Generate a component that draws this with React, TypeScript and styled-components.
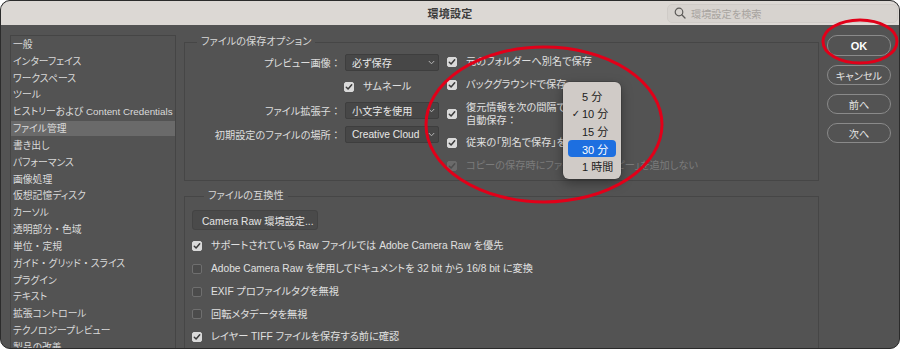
import React from "react";
import styled, { createGlobalStyle } from "styled-components";

const GlobalStyle = createGlobalStyle`
  html, body { margin: 0; padding: 0; background: #ffffff; }
  body { font-family: "Liberation Sans", "Noto Sans CJK JP", sans-serif; }
  * { box-sizing: border-box; }
`;

const Window = styled.div`
  position: relative;
  width: 900px;
  height: 349px;
  border: 1px solid #2b2b2b;
  border-radius: 10px;
  overflow: hidden;
  background: #535353;
  display: flex;
  flex-direction: column;
  font-feature-settings: "palt";
`;

const Punct = styled.span`
  font-feature-settings: normal;
`;

const TitleBar = styled.header`
  flex: none;
  height: 24px;
  background: #dcd8d4;
  display: grid;
  grid-template-columns: 1fr auto 1fr;
  align-items: center;
`;

const Title = styled.div`
  grid-column: 2;
  font-family: "Noto Sans CJK JP", sans-serif;
  font-weight: 700;
  font-size: 11px;
  color: #3b3b3b;
  letter-spacing: 0.2px;
`;

const Search = styled.div`
  grid-column: 3;
  justify-self: end;
  margin-right: 1px;
  width: 231px;
  height: 19px;
  border-radius: 5px;
  background: #d7d3cf;
  border: 1px solid #cfcbc7;
  display: flex;
  align-items: center;
  gap: 5px;
  padding-left: 6px;
  color: #a8a4a0;
  font-size: 10.2px;
`;

const Body = styled.div`
  flex: 1;
  min-height: 0;
  display: grid;
  grid-template-columns: 166px 635px 64px;
  column-gap: 8px;
  align-items: start;
  padding: 10px 0 0 9px;
`;

const Sidebar = styled.ul`
  margin: 0;
  height: 340px;
  border: 1px solid #454545;
  padding: 1px 0 0 0;
  list-style: none;
  display: flex;
  flex-direction: column;
  gap: 1.83px;
`;

const SideItem = styled.li<{ $active?: boolean }>`
  height: 15px;
  line-height: 15px;
  padding-left: 2px;
  font-size: 9.8px;
  color: #dadada;
  white-space: nowrap;
  background: ${(p) => (p.$active ? "#6a6a6a" : "transparent")};
`;

const Main = styled.div`
  display: flex;
  flex-direction: column;
  gap: 8px;
`;

const Section = styled.fieldset<{ $open?: boolean }>`
  margin: 0;
  min-width: 0;
  border: 1px solid #464646;
  ${(p) => (p.$open ? "border-bottom: none; height: 200px;" : "")}
  padding: ${(p) => (p.$open ? "7px 0 0 7px" : "5px 0 6px 0")};
`;

const Legend = styled.legend`
  margin-left: 12px;
  padding: 0 4px;
  font-size: 10.2px;
  line-height: 14px;
  color: #d8d8d8;
`;

const SaveOptions = styled.div`
  display: flex;
  align-items: flex-start;
`;

const FormGrid = styled.div`
  padding-left: 1px;
  display: grid;
  grid-template-columns: 155px 94px;
  grid-auto-rows: 17px;
  column-gap: 4px;
  row-gap: 7px;
  align-items: center;
`;

const FieldLabel = styled.div`
  grid-column: 1;
  text-align: right;
  font-size: 10.2px;
  color: #dedede;
  white-space: nowrap;
`;

const Select = styled.div`
  grid-column: 2;
  height: 17px;
  background: #474747;
  border: 1px solid #3e3e3e;
  border-radius: 2px;
  display: flex;
  align-items: center;
  justify-content: space-between;
  padding: 0 3px 0 6px;
  font-size: 10.2px;
  color: #e8e8e8;
  white-space: nowrap;
  overflow: hidden;
`;

const CheckRows = styled.div`
  margin-left: 8px;
  display: flex;
  flex-direction: column;
  gap: 7px;
`;

const CheckRow = styled.div<{ $tall?: boolean; $disabled?: boolean }>`
  height: ${(p) => (p.$tall ? 28 : 16)}px;
  display: flex;
  align-items: center;
  gap: 9px;
  font-size: 10.2px;
  line-height: 13.5px;
  color: ${(p) => (p.$disabled ? "#7b7b7b" : "#e0e0e0")};
  white-space: nowrap;
`;

const ThumbRow = styled(CheckRow)`
  grid-column: 2;
  height: 17px;
  margin-left: -1px;
`;

const Box = styled.span<{ $checked?: boolean; $disabled?: boolean }>`
  flex: none;
  width: 10px;
  height: 10px;
  border-radius: 2px;
  display: inline-flex;
  align-items: center;
  justify-content: center;
  background: ${(p) =>
    p.$checked ? (p.$disabled ? "#6b6b6b" : "#d9d9d9") : "#4b4b4b"};
  border: 1px solid
    ${(p) => (p.$checked ? (p.$disabled ? "#6b6b6b" : "#d9d9d9") : "#6f6f6f")};
`;

const Compat = styled.div`
  display: flex;
  flex-direction: column;
  gap: 6.8px;
`;

const RawButton = styled.div`
  align-self: flex-start;
  width: 126px;
  height: 20px;
  margin-bottom: 1.2px;
  background: #4a4a4a;
  border: 1px solid #434343;
  border-radius: 3px;
  display: flex;
  align-items: center;
  padding-left: 9px;
  font-size: 10.2px;
  color: #e4e4e4;
  white-space: nowrap;
`;

const Actions = styled.div`
  display: flex;
  flex-direction: column;
  gap: 9px;
`;

const ActionButton = styled.div<{ $primary?: boolean }>`
  height: ${(p) => (p.$primary ? 21 : 20)}px;
  border: 1px solid #8a8a8a;
  border-radius: 10px;
  display: flex;
  align-items: center;
  justify-content: center;
  font-size: ${(p) => (p.$primary ? 11 : 10.2)}px;
  font-weight: ${(p) => (p.$primary ? 700 : 400)};
  color: ${(p) => (p.$primary ? "#ffffff" : "#e4e4e4")};
`;

const Menu = styled.div`
  position: absolute;
  left: 562px;
  top: 81px;
  width: 58px;
  padding: 5px 5px 4px;
  background: #d0cbc7;
  border-radius: 6px;
  box-shadow: 0 0 0 0.5px rgba(0, 0, 0, 0.25), 0 4px 12px rgba(0, 0, 0, 0.35);
`;

const MenuItem = styled.div<{ $active?: boolean }>`
  height: 17.6px;
  display: grid;
  grid-template-columns: 14px auto;
  align-items: center;
  border-radius: 4px;
  font-size: 11px;
  color: ${(p) => (p.$active ? "#ffffff" : "#202020")};
  background: ${(p) => (p.$active ? "#1d6fe0" : "transparent")};
  white-space: nowrap;
`;

const Tick = styled.span`
  font-family: "DejaVu Sans", sans-serif;
  font-size: 10px;
  text-align: center;
  padding-left: 2px;
`;

const Annotations = styled.svg`
  position: absolute;
  left: -1px;
  top: -1px;
  pointer-events: none;
`;

const Jp = ({ text }: { text: string }) => (
  <>
    {text.split(/([・：])/).map((part, i) =>
      part === "・" || part === "：" ? <Punct key={i}>{part}</Punct> : part
    )}
  </>
);

const Chevron = () => (
  <svg width="7" height="5" viewBox="0 0 7 5">
    <polyline points="0.8,1 3.5,3.8 6.2,1" fill="none" stroke="#b5b5b5" strokeWidth="1" />
  </svg>
);

const CheckBox = ({ checked, disabled }: { checked?: boolean; disabled?: boolean }) => (
  <Box $checked={checked} $disabled={disabled}>
    {checked && (
      <svg width="8" height="8" viewBox="0 0 8 8">
        <polyline
          points="1.3,4.2 3.1,6 6.7,1.8"
          fill="none"
          stroke={disabled ? "#4e4e4e" : "#3a3a3a"}
          strokeWidth="1.5"
          strokeLinecap="round"
          strokeLinejoin="round"
        />
      </svg>
    )}
  </Box>
);

const sidebarItems = [
  "一般",
  "インターフェイス",
  "ワークスペース",
  "ツール",
  "ヒストリーおよび Content Credentials",
  "ファイル管理",
  "書き出し",
  "パフォーマンス",
  "画像処理",
  "仮想記憶ディスク",
  "カーソル",
  "透明部分・色域",
  "単位・定規",
  "ガイド・グリッド・スライス",
  "プラグイン",
  "テキスト",
  "拡張コントロール",
  "テクノロジープレビュー",
  "製品の改善",
];

const compatRows = [
  { label: "サポートされている Raw ファイルでは Adobe Camera Raw を優先", checked: true },
  { label: "Adobe Camera Raw を使用してドキュメントを 32 bit から 16/8 bit に変換", checked: false },
  { label: "EXIF プロファイルタグを無視", checked: false },
  { label: "回転メタデータを無視", checked: false },
  { label: "レイヤー TIFF ファイルを保存する前に確認", checked: true },
];

const menuItems = [
  { label: "5 分" },
  { label: "10 分", current: true },
  { label: "15 分" },
  { label: "30 分", active: true },
  { label: "1 時間" },
];

export default function App() {
  return (
    <>
      <GlobalStyle />
      <Window>
        <TitleBar>
          <Title>環境設定</Title>
          <Search>
            <svg width="12" height="12" viewBox="0 0 12 12">
              <circle cx="5" cy="5" r="3.8" fill="none" stroke="#5c5a58" strokeWidth="1.2" />
              <line x1="7.8" y1="7.8" x2="11" y2="11" stroke="#5c5a58" strokeWidth="1.3" strokeLinecap="round" />
            </svg>
            <span>環境設定を検索</span>
          </Search>
        </TitleBar>
        <Body>
          <Sidebar>
            {sidebarItems.map((item) => (
              <SideItem key={item} $active={item === "ファイル管理"}>
                <Jp text={item} />
              </SideItem>
            ))}
          </Sidebar>
          <Main>
            <Section>
              <Legend>ファイルの保存オプション</Legend>
              <SaveOptions>
                <FormGrid>
                  <FieldLabel>
                    <Jp text="プレビュー画像：" />
                  </FieldLabel>
                  <Select>
                    <span>必ず保存</span>
                    <Chevron />
                  </Select>
                  <ThumbRow>
                    <CheckBox checked />
                    <span>サムネール</span>
                  </ThumbRow>
                  <FieldLabel>
                    <Jp text="ファイル拡張子：" />
                  </FieldLabel>
                  <Select>
                    <span>小文字を使用</span>
                    <Chevron />
                  </Select>
                  <FieldLabel>
                    <Jp text="初期設定のファイルの場所：" />
                  </FieldLabel>
                  <Select>
                    <span>Creative Cloud</span>
                    <Chevron />
                  </Select>
                </FormGrid>
                <CheckRows>
                  <CheckRow>
                    <CheckBox checked />
                    <span>元のフォルダーへ別名で保存</span>
                  </CheckRow>
                  <CheckRow>
                    <CheckBox checked />
                    <span>バックグラウンドで保存</span>
                  </CheckRow>
                  <CheckRow $tall>
                    <CheckBox checked />
                    <span>
                      復元情報を次の間隔で
                      <br />
                      <Jp text="自動保存：" />
                    </span>
                  </CheckRow>
                  <CheckRow>
                    <CheckBox checked />
                    <span>従来の「別名で保存」を使用</span>
                  </CheckRow>
                  <CheckRow $disabled>
                    <CheckBox checked disabled />
                    <span>コピーの保存時にファイル名に「コピー」を追加しない</span>
                  </CheckRow>
                </CheckRows>
              </SaveOptions>
            </Section>
            <Section $open>
              <Legend>ファイルの互換性</Legend>
              <Compat>
                <RawButton>Camera Raw 環境設定...</RawButton>
                {compatRows.map((r) => (
                  <CheckRow key={r.label}>
                    <CheckBox checked={r.checked} />
                    <span>{r.label}</span>
                  </CheckRow>
                ))}
              </Compat>
            </Section>
          </Main>
          <Actions>
            <ActionButton $primary>OK</ActionButton>
            <ActionButton>キャンセル</ActionButton>
            <ActionButton>前へ</ActionButton>
            <ActionButton>次へ</ActionButton>
          </Actions>
        </Body>
        <Menu>
          {menuItems.map((m) => (
            <MenuItem key={m.label} $active={m.active}>
              <Tick>{m.current ? "✓" : ""}</Tick>
              <span>{m.label}</span>
            </MenuItem>
          ))}
        </Menu>
        <Annotations width="900" height="349" viewBox="0 0 900 349">
          <ellipse cx="544" cy="124.5" rx="118" ry="77.5" fill="none" stroke="#e10019" strokeWidth="3" />
          <ellipse cx="860" cy="41.5" rx="37" ry="21.5" fill="none" stroke="#e10019" strokeWidth="3" />
        </Annotations>
      </Window>
    </>
  );
}
